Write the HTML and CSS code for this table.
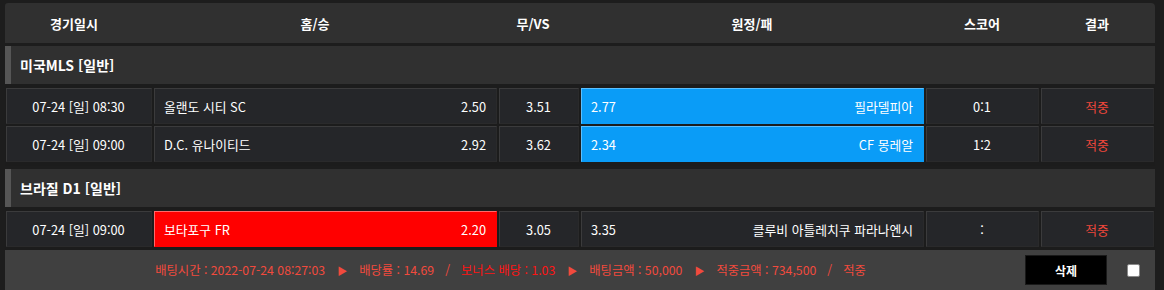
FILE: index.html
```html
<!DOCTYPE html>
<html lang="ko">
<head>
<meta charset="utf-8">
<link rel="stylesheet" href="styles.css">
</head>
<body>
<div class="wrap">
  <div class="head">
    <div>경기일시</div>
    <div>홈/승</div>
    <div>무/VS</div>
    <div>원정/패</div>
    <div>스코어</div>
    <div>결과</div>
  </div>

  <div class="league">미국MLS [일반]</div>
  <div class="rows">
    <div class="row">
      <div class="cell c">07-24 [일] 08:30</div>
      <div class="cell split"><span>올랜도 시티 SC</span><span>2.50</span></div>
      <div class="cell c">3.51</div>
      <div class="cell split blue"><span>2.77</span><span>필라델피아</span></div>
      <div class="cell c">0:1</div>
      <div class="cell c hit">적중</div>
    </div>
    <div class="row">
      <div class="cell c">07-24 [일] 09:00</div>
      <div class="cell split"><span>D.C. 유나이티드</span><span>2.92</span></div>
      <div class="cell c">3.62</div>
      <div class="cell split blue"><span>2.34</span><span>CF 몽레알</span></div>
      <div class="cell c">1:2</div>
      <div class="cell c hit">적중</div>
    </div>
  </div>

  <div class="league">브라질 D1 [일반]</div>
  <div class="rows last">
    <div class="row">
      <div class="cell c">07-24 [일] 09:00</div>
      <div class="cell split red"><span>보타포구 FR</span><span>2.20</span></div>
      <div class="cell c">3.05</div>
      <div class="cell split"><span>3.35</span><span>클루비 아틀레치쿠 파라나엔시</span></div>
      <div class="cell c">:</div>
      <div class="cell c hit">적중</div>
    </div>
  </div>

  <div class="foot">
    <div class="info">
      <span>배팅시간 : 2022-07-24 08:27:03</span>
      <span class="arrow">▶</span>
      <span>배당률 : 14.69</span>
      <span class="sep">/</span>
      <span class="bonus">보너스 배당 : 1.03</span>
      <span class="arrow">▶</span>
      <span>배팅금액 : 50,000</span>
      <span class="arrow">▶</span>
      <span>적중금액 : 734,500</span>
      <span class="sep">/</span>
      <span>적중</span>
    </div>
    <div class="del">삭제</div>
    <div class="chk"></div>
  </div>
</div>
</body>
</html>
```
FILE: styles.css
```css
html, body {
  margin: 0;
  padding: 0;
  background: #1d1d1d;
}
body {
  font-family: "Noto Sans CJK KR", "Noto Sans", sans-serif;
  color: #fff;
  font-size: 12px;
}
.wrap {
  width: 1150px;
  margin-left: 5px;
  padding-top: 3px;
}
.head {
  display: grid;
  grid-template-columns: 138px 344px 92px 346px 114px 116px;
  height: 40px;
  background: #303030;
  border-radius: 3px 4px 0 0;
  font-weight: bold;
  font-size: 13px;
}
.head div {
  display: flex;
  align-items: center;
  justify-content: center;
}
.league {
  margin-top: 3px;
  height: 38px;
  background: #303030;
  border-left: 6px solid #565656;
  display: flex;
  align-items: center;
  padding-left: 9px;
  font-weight: bold;
  font-size: 14px;
}
.rows {
  padding: 4px 1px;
  display: flex;
  flex-direction: column;
  gap: 2px;
  background: #1c1c1c;
}
.rows.last {
  padding-bottom: 3px;
}
.row {
  display: grid;
  grid-template-columns: 146px 343px 80px 343px 113px 113px;
  column-gap: 2px;
  height: 36px;
}
.cell {
  box-sizing: border-box;
  background: #252629;
  border-top: 1px solid #3b3b3c;
  border-left: 1px solid #3b3b3c;
  border-right: 1px solid #2a2a2b;
  border-bottom: 1px solid #2a2a2b;
  display: flex;
  align-items: center;
  padding: 0 10px 0 9px;
  font-size: 12.8px;
}
.cell.c {
  justify-content: center;
}
.cell.split {
  justify-content: space-between;
}
.cell.blue {
  background: #0a9cf7;
  border-top-color: #5cc0ff;
  border-left-color: #5cc0ff;
  border-right-color: #0a9cf7;
  border-bottom-color: #0a9cf7;
}
.cell.red {
  background: #ff0000;
  border-top-color: #ff6a6a;
  border-left-color: #ff6a6a;
  border-right-color: #ff0000;
  border-bottom-color: #ff0000;
}
.cell.hit {
  color: #f0473b;
}
.foot {
  height: 40px;
  background: #404040;
  display: flex;
  align-items: center;
}
.info {
  flex: 1;
  display: flex;
  justify-content: center;
  align-items: center;
  color: #f24a3d;
  font-size: 12.3px;
  padding-left: 6px;
}
.info .arrow {
  font-size: 10px;
  margin: 0 12px;
}
.info .sep {
  margin: 0 11px;
}
.info .bonus {
  color: #ff1414;
}
.del {
  width: 82px;
  height: 30px;
  box-sizing: border-box;
  background: #000;
  border: 1px solid #1a1a1a;
  display: flex;
  align-items: center;
  justify-content: center;
  font-weight: bold;
  font-size: 12px;
  margin-left: 15px;
}
.chk {
  width: 13px;
  height: 13px;
  box-sizing: border-box;
  background: #fff;
  border: 1px solid #8a8a8a;
  border-radius: 2px;
  margin-left: 20px;
  margin-right: 15px;
}
```
